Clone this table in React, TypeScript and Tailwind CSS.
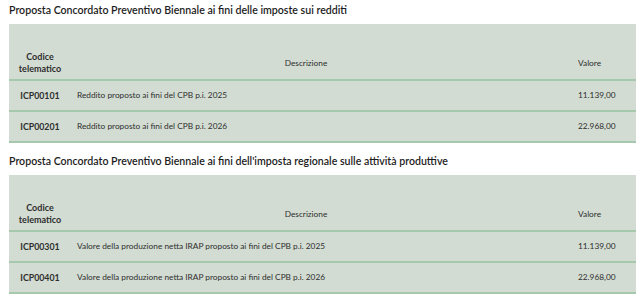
import React from 'react'

type Row = { code: string; desc: string; value: string }

const sections: { title: string; rows: Row[] }[] = [
  {
    title: 'Proposta Concordato Preventivo Biennale ai fini delle imposte sui redditi',
    rows: [
      { code: 'ICP00101', desc: 'Reddito proposto ai fini del CPB p.i. 2025', value: '11.139,00' },
      { code: 'ICP00201', desc: 'Reddito proposto ai fini del CPB p.i. 2026', value: '22.968,00' },
    ],
  },
  {
    title: "Proposta Concordato Preventivo Biennale ai fini dell'imposta regionale sulle attività produttive",
    rows: [
      { code: 'ICP00301', desc: 'Valore della produzione netta IRAP proposto ai fini del CPB p.i. 2025', value: '11.139,00' },
      { code: 'ICP00401', desc: 'Valore della produzione netta IRAP proposto ai fini del CPB p.i. 2026', value: '22.968,00' },
    ],
  },
]

function ProposalTable({ title, rows }: { title: string; rows: Row[] }) {
  return (
    <section className="first:mt-0 mt-[8px]">
      <h2 className="text-[10.6px] leading-[20px] font-semibold text-[#1c1c1c]">{title}</h2>
      <table className="mt-[4px] w-[627px] bg-[#d2dcd2] border-collapse text-[8.3px] text-[#2e2e2e]">
        <thead>
          <tr className="h-[56px] border-b-2 border-[#a6c9ae]">
            <th className="w-[62px] align-bottom pb-[4px] text-[9px] font-bold leading-[12px] text-center">
              Codice
              <br />
              telematico
            </th>
            <th className="align-bottom pb-[10px] font-normal text-center">Descrizione</th>
            <th className="w-[95px] align-bottom pb-[10px] pl-[37px] font-normal text-left">Valore</th>
          </tr>
        </thead>
        <tbody>
          {rows.map((row) => (
            <tr key={row.code} className="h-[31px] border-b-2 border-[#a6c9ae]">
              <td className="text-center text-[8.8px] font-bold">{row.code}</td>
              <td className="pl-[6px]">{row.desc}</td>
              <td className="pl-[37px]">{row.value}</td>
            </tr>
          ))}
        </tbody>
      </table>
    </section>
  )
}

export default function App() {
  return (
    <div className="w-[642px] h-[299px] bg-white px-[9px] font-['Lato',sans-serif] overflow-hidden">
      {sections.map((s) => (
        <ProposalTable key={s.title} title={s.title} rows={s.rows} />
      ))}
    </div>
  )
}
